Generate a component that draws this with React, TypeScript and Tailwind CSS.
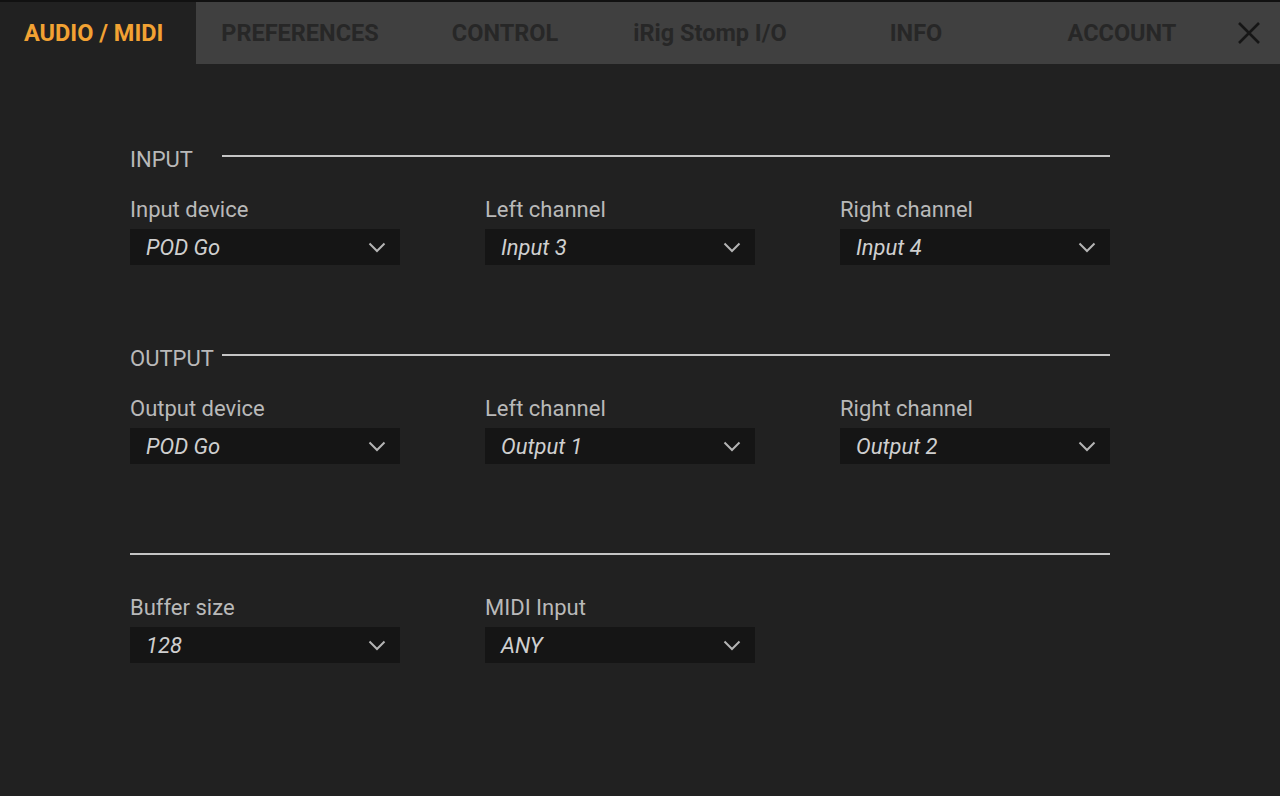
import React from 'react';

const tabs = [
  { label: 'PREFERENCES', w: 'w-[208px]' },
  { label: 'CONTROL', w: 'w-[202px]' },
  { label: 'iRig Stomp I/O', w: 'w-[208px]' },
  { label: 'INFO', w: 'w-[204px]' },
  { label: 'ACCOUNT', w: 'w-[208px]' },
];

function Chevron() {
  return (
    <svg width="18" height="11" viewBox="0 0 18 11" fill="none">
      <path d="M1.5 1.5 L9 9 L16.5 1.5" stroke="#b4b4b4" strokeWidth="2" />
    </svg>
  );
}

function Select({ label, value }: { label: string; value: string }) {
  return (
    <div className="flex w-[270px] flex-col">
      <div className="h-[28px] text-[22px] leading-[28px] text-[#b9b9b9]">{label}</div>
      <div className="mt-[5px] flex h-[36px] items-center justify-between bg-[#151515] pl-[16px] pr-[14px]">
        <span className="text-[22px] italic text-[#cfcfcf]">{value}</span>
        <Chevron />
      </div>
    </div>
  );
}

function Heading({ title }: { title: string }) {
  return (
    <div className="flex h-[28px] items-center">
      <span className="w-[92px] text-[22px] leading-[28px] text-[#b9b9b9]">{title}</span>
      <div className="mb-[8px] h-[2px] flex-1 bg-[#c4c4c4]" />
    </div>
  );
}

function Row({ items }: { items: { label: string; value: string }[] }) {
  return (
    <div className="mt-[22px] flex gap-[85px]">
      {items.map((it) => (
        <Select key={it.label} label={it.label} value={it.value} />
      ))}
    </div>
  );
}

export default function App() {
  return (
    <div
      className="flex h-[796px] w-[1280px] flex-col overflow-hidden bg-[#212121]"
      style={{ fontFamily: 'Roboto, "Noto Sans", sans-serif' }}
    >
      <div className="h-[2px] bg-[#111111]" />
      <div className="flex h-[62px] items-center bg-[#404040]">
        <div className="flex h-full w-[196px] items-center bg-[#212121] pl-[24px] pt-[2px] text-[23.5px] font-bold text-[#f2a233]">
          AUDIO / MIDI
        </div>
        {tabs.map((t) => (
          <div
            key={t.label}
            className={`${t.w} flex h-full items-center justify-center pt-[2px] text-[23.5px] font-bold text-[#272727]`}
          >
            {t.label}
          </div>
        ))}
        <div className="flex flex-1 items-center justify-end pr-[19px]">
          <svg width="24" height="24" viewBox="0 0 24 24">
            <path d="M2 2 L22 22 M22 2 L2 22" stroke="#161616" strokeWidth="2.6" />
          </svg>
        </div>
      </div>

      <div className="ml-[130px] mt-[82px] w-[980px]">
        <Heading title="INPUT" />
        <Row
          items={[
            { label: 'Input device', value: 'POD Go' },
            { label: 'Left channel', value: 'Input 3' },
            { label: 'Right channel', value: 'Input 4' },
          ]}
        />

        <div className="mt-[80px]">
          <Heading title="OUTPUT" />
        </div>
        <Row
          items={[
            { label: 'Output device', value: 'POD Go' },
            { label: 'Left channel', value: 'Output 1' },
            { label: 'Right channel', value: 'Output 2' },
          ]}
        />

        <div className="mt-[89px] h-[2px] bg-[#c4c4c4]" />
        <div className="mt-[39px] flex gap-[85px]">
          <Select label="Buffer size" value="128" />
          <Select label="MIDI Input" value="ANY" />
        </div>
      </div>
    </div>
  );
}
